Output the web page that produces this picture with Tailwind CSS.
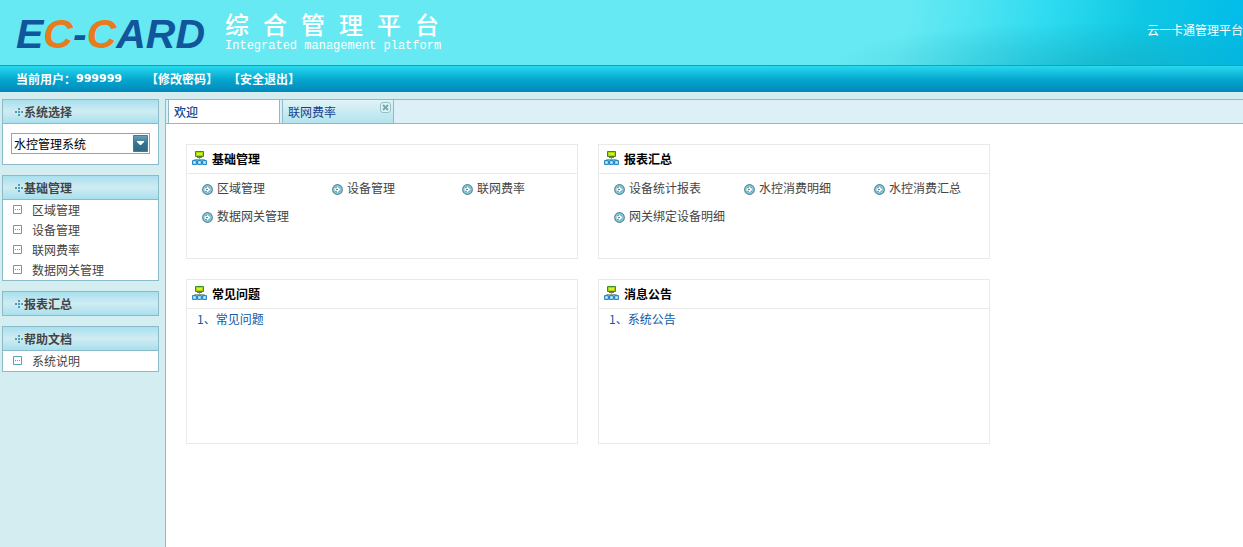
<!DOCTYPE html>
<html lang="zh-CN">
<head>
<meta charset="utf-8">
<title>综合管理平台</title>
<script src="https://cdn.jsdelivr.net/npm/@tailwindcss/browser@4"></script>
</head>
<body class="flex min-h-screen flex-col overflow-x-hidden bg-[#d4edf1] font-['Noto_Sans_CJK_SC',sans-serif] text-xs text-[#444]">
<svg class="hidden" aria-hidden="true">
  <symbol id="cross" viewBox="0 0 8 8"><path fill="#4f9db4" d="M3 0h2v2H3zM3 3h2v2H3zM3 6h2v2H3zM0 3h2v2H0zM6 3h2v2H6z"/></symbol>
  <symbol id="leaf" viewBox="0 0 9 9"><path fill="#fff" stroke="#5aa0b4" d="M.5.5h8v8h-8z"/><path fill="#5aa0b4" d="M2 4h1v1H2zM4 4h1v1H4zM6 4h1v1H6z"/></symbol>
  <symbol id="net" viewBox="0 0 15 15"><path fill="none" stroke="#9aa59a" d="M7.500 6v3M2.500 10V8.500h10V10"/><path fill="#a5d800" stroke="#3f8a1c" d="M3.500.5h8v5h-8z"/><path fill="#d6ec3c" d="M5 2h5v2H5z"/><path fill="#777" d="M5 6h5v1H5z"/><path fill="#8fd0f2" stroke="#2a8cc4" d="M.5 9.500h4v4h-4zM5.500 9.500h4v4h-4zM10.500 9.500h4v4h-4z"/><path fill="#e4f6ff" d="M2 11h1v1H2zM7 11h1v1H7zM12 11h1v1h-1z"/></symbol>
  <symbol id="go" viewBox="0 0 11 11"><circle cx="5.500" cy="5.500" r="4.800" fill="#5fb0c4" stroke="#56859a" stroke-width="1.200"/><circle cx="5.500" cy="5.500" r="3.800" fill="none" stroke="#a5dbe4" stroke-width=".8"/><path fill="#fff" d="M5 2.300 8.600 5.500 5 8.700V6.700H2.500V4.300H5z"/><path fill="#4391a8" d="M4 5h2v1H4z"/></symbol>
</svg>

<header class="flex h-[66px] shrink-0 items-start border-b border-[#1b9fc0] bg-[radial-gradient(ellipse_260px_44px_at_calc(100%-150px)_100%,#149fb070,#149fb000),linear-gradient(100deg,#66e9f2_0,#66e9f2_calc(100%-340px),#55e5f2_calc(100%-290px),#2edbf0_calc(100%-200px),#10c8e4_calc(100%-110px),#00bbea_100%)]">
  <div class="ml-4 mt-3 flex h-11 items-center whitespace-nowrap font-['Liberation_Sans',sans-serif] text-[41px] font-bold italic text-[#11569b]" aria-label="EC-CARD">E<span class="text-[#e87b1c]">C</span>-<span class="text-[#e87b1c]">C</span>ARD</div>
  <div class="ml-5 mt-2.5 text-white">
    <h1 class="flex gap-3.5 text-2xl font-medium leading-7"><span>综</span><span>合</span><span>管</span><span>理</span><span>平</span><span>台</span></h1>
    <p class="whitespace-nowrap font-['Liberation_Mono',monospace] text-xs leading-4">Integrated management platform</p>
  </div>
  <p class="ml-auto mt-[22px] whitespace-nowrap leading-4 text-white">云一卡通管理平台</p>
</header>

<nav class="flex h-[26px] shrink-0 items-center bg-linear-to-b from-[#27d9ee] via-[#05a9d0] to-[#0287bb] pl-4 font-bold text-white">
  <span>当前用户：</span><span class="font-['DejaVu_Sans',sans-serif] text-[11px]">999999</span>
  <a href="#" class="ml-6">【修改密码】</a>
  <a href="#" class="ml-2.5">【安全退出】</a>
</nav>

<div class="flex grow pt-[7px]">
  <aside class="flex w-[165px] shrink-0 flex-col gap-2.5 pl-0.5 pr-1.5 text-[#444]">
    <section class="border border-[#8bbbc8] bg-white">
      <h2 class="flex h-6 items-center gap-px border-b border-[#8bbbc8] bg-linear-to-b from-[#a8e0ee] via-[#d0ecf2] to-[#a8e0ee] pl-3 font-bold"><svg class="size-2"><use href="#cross"/></svg><label for="sys">系统选择</label></h2>
      <div class="relative mx-2 my-[9px] h-[22px]">
        <select id="sys" class="h-[21px] w-full appearance-none border border-[#7fadb4] bg-white pl-0.5 text-xs leading-4 text-black"><option>水控管理系统</option></select>
        <svg class="pointer-events-none absolute right-0.5 top-0.5 h-[17px] w-[15px]" viewBox="0 0 15 17"><defs><linearGradient id="g" x2="0" y2="1"><stop stop-color="#6ba3b8"/><stop offset=".5" stop-color="#33748f"/><stop offset="1" stop-color="#2c6a86"/></linearGradient></defs><path fill="url(#g)" stroke="#3d7d96" d="M.5.5h14v16H.5z"/><path fill="#fff" d="M4 6h7v1l-3 3H7L4 7z"/></svg>
      </div>
    </section>
    <section class="border border-[#8bbbc8] bg-white">
      <h2 class="flex h-6 items-center gap-px border-b border-[#8bbbc8] bg-linear-to-b from-[#a8e0ee] via-[#d0ecf2] to-[#a8e0ee] pl-3 font-bold"><svg class="size-2"><use href="#cross"/></svg>基础管理</h2>
      <ul class="leading-5">
        <li><a href="#" class="flex pl-2.5"><svg class="mr-2.5 mt-[5px] size-[9px]"><use href="#leaf"/></svg>区域管理</a></li>
        <li><a href="#" class="flex pl-2.5"><svg class="mr-2.5 mt-[5px] size-[9px]"><use href="#leaf"/></svg>设备管理</a></li>
        <li><a href="#" class="flex pl-2.5"><svg class="mr-2.5 mt-[5px] size-[9px]"><use href="#leaf"/></svg>联网费率</a></li>
        <li><a href="#" class="flex pl-2.5"><svg class="mr-2.5 mt-[5px] size-[9px]"><use href="#leaf"/></svg>数据网关管理</a></li>
      </ul>
    </section>
    <section class="border border-[#8bbbc8] bg-white">
      <h2 class="flex h-[23px] items-center gap-px bg-linear-to-b from-[#a8e0ee] via-[#d0ecf2] to-[#a8e0ee] pl-3 font-bold"><svg class="size-2"><use href="#cross"/></svg>报表汇总</h2>
    </section>
    <section class="border border-[#8bbbc8] bg-white">
      <h2 class="flex h-6 items-center gap-px border-b border-[#8bbbc8] bg-linear-to-b from-[#a8e0ee] via-[#d0ecf2] to-[#a8e0ee] pl-3 font-bold"><svg class="size-2"><use href="#cross"/></svg>帮助文档</h2>
      <a href="#" class="flex pl-2.5 leading-5"><svg class="mr-2.5 mt-[5px] size-[9px]"><use href="#leaf"/></svg>系统说明</a>
    </section>
  </aside>

  <main class="min-w-0 grow border-l border-t border-[#8bbbc8] bg-white">
    <div class="flex h-6 gap-0.5 border-b border-[#8bbbc8] bg-[#ddf0f7] pl-0.5 text-[#15428b]">
      <button class="flex w-[112px] items-center border-x border-[#8bbbc8] bg-white pl-[5px] font-medium">欢迎</button>
      <div class="flex w-[112px] items-start border-x border-[#8bbbc8] bg-linear-to-b from-[#e0f3f8] to-[#b4e3ed] pl-[5px]">
        <button class="h-full">联网费率</button>
        <button class="ml-auto mr-0.5 mt-0.5" aria-label="关闭"><svg class="size-[11px]" viewBox="0 0 11 11"><rect x=".5" y=".5" width="10" height="10" rx="2.500" fill="#e3f5f6" stroke="#92c2c6"/><path stroke="#74a9ad" stroke-width="2" d="m3 3 5 5m0-5L3 8"/></svg></button>
      </div>
    </div>
    <div class="grid max-w-[844px] grid-cols-2 gap-5 p-5">
      <section class="h-[115px] border border-[#eaeaea]">
        <h2 class="flex h-[29px] items-center gap-[5px] border-b border-[#eaeaea] pl-[5px] font-bold text-black"><svg class="mb-0.5 size-[15px]"><use href="#net"/></svg>基础管理</h2>
        <ul class="grid grid-cols-[130px_130px_1fr] pl-[15px] leading-7">
          <li><a href="#" class="flex items-center gap-1 whitespace-nowrap"><svg class="mt-0.5 size-[11px]"><use href="#go"/></svg>区域管理</a></li>
          <li><a href="#" class="flex items-center gap-1 whitespace-nowrap"><svg class="mt-0.5 size-[11px]"><use href="#go"/></svg>设备管理</a></li>
          <li><a href="#" class="flex items-center gap-1 whitespace-nowrap"><svg class="mt-0.5 size-[11px]"><use href="#go"/></svg>联网费率</a></li>
          <li><a href="#" class="flex items-center gap-1 whitespace-nowrap"><svg class="mt-0.5 size-[11px]"><use href="#go"/></svg>数据网关管理</a></li>
        </ul>
      </section>
      <section class="h-[115px] border border-[#eaeaea]">
        <h2 class="flex h-[29px] items-center gap-[5px] border-b border-[#eaeaea] pl-[5px] font-bold text-black"><svg class="mb-0.5 size-[15px]"><use href="#net"/></svg>报表汇总</h2>
        <ul class="grid grid-cols-[130px_130px_1fr] pl-[15px] leading-7">
          <li><a href="#" class="flex items-center gap-1 whitespace-nowrap"><svg class="mt-0.5 size-[11px]"><use href="#go"/></svg>设备统计报表</a></li>
          <li><a href="#" class="flex items-center gap-1 whitespace-nowrap"><svg class="mt-0.5 size-[11px]"><use href="#go"/></svg>水控消费明细</a></li>
          <li><a href="#" class="flex items-center gap-1 whitespace-nowrap"><svg class="mt-0.5 size-[11px]"><use href="#go"/></svg>水控消费汇总</a></li>
          <li><a href="#" class="flex items-center gap-1 whitespace-nowrap"><svg class="mt-0.5 size-[11px]"><use href="#go"/></svg>网关绑定设备明细</a></li>
        </ul>
      </section>
      <section class="h-[165px] border border-[#eaeaea]">
        <h2 class="flex h-[29px] items-center gap-[5px] border-b border-[#eaeaea] pl-[5px] font-bold text-black"><svg class="mb-0.5 size-[15px]"><use href="#net"/></svg>常见问题</h2>
        <a href="#" class="ml-2.5 leading-5 text-[#0a5cab]">1、常见问题</a>
      </section>
      <section class="h-[165px] border border-[#eaeaea]">
        <h2 class="flex h-[29px] items-center gap-[5px] border-b border-[#eaeaea] pl-[5px] font-bold text-black"><svg class="mb-0.5 size-[15px]"><use href="#net"/></svg>消息公告</h2>
        <a href="#" class="ml-2.5 leading-5 text-[#0a5cab]">1、系统公告</a>
      </section>
    </div>
  </main>
</div>
</body>
</html>
